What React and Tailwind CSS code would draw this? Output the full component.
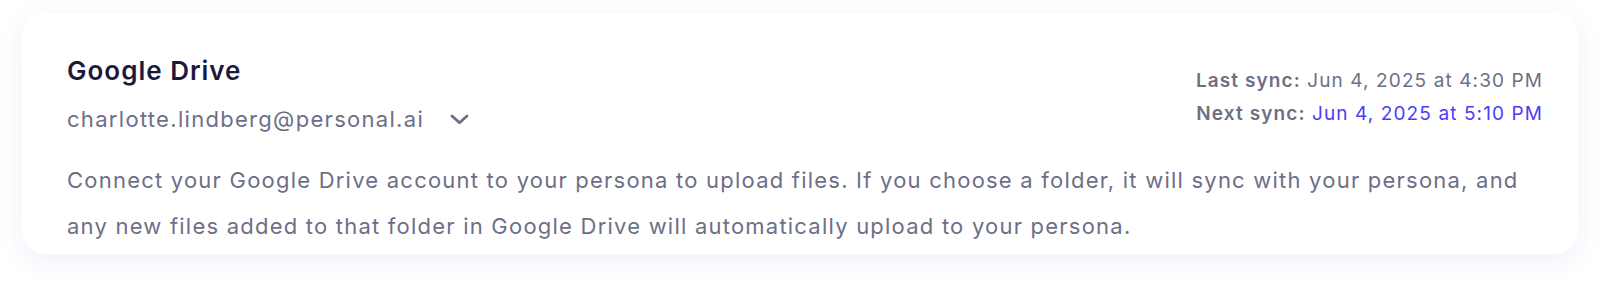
const GoogleDriveCard = () => {
  return (
    <div className="min-h-[286px] w-[1600px] bg-white pt-[13px] px-[22px] font-['Inter',sans-serif]">
      <div className="rounded-[24px] bg-white pt-[42px] pb-[5px] pl-[45px] pr-[35px] shadow-[0_6px_26px_rgba(100,90,240,0.1)]">
        <div className="flex items-start justify-between">
          <div>
            <h2 className="text-[26px] leading-[32px] font-semibold tracking-[1px] text-[#1b1a3d]">Google Drive</h2>
            <button type="button" className="mt-[16px] flex items-center gap-[26px] text-[22px] leading-[32px] tracking-[1.3px] text-[#6d6f87]">
              <span>charlotte.lindberg@personal.ai</span>
              <svg width="19" height="11" viewBox="0 0 19 11" fill="none" stroke="currentColor" strokeWidth="2.8" strokeLinecap="round" strokeLinejoin="round">
                <polyline points="2,2 9.5,8.8 17,2" />
              </svg>
            </button>
          </div>
          <div className="mt-[9px] text-right text-[19px] leading-[33px] tracking-[1.1px] text-[#6d6f87]">
            <p>
              <span className="font-semibold">Last sync:</span> Jun 4, 2025 at 4:30 PM
            </p>
            <p>
              <span className="font-semibold">Next sync:</span> <span className="text-[#4c3ef4]">Jun 4, 2025 at 5:10 PM</span>
            </p>
          </div>
        </div>
        <p className="mt-[22px] text-[22px] leading-[46px] tracking-[1.22px] text-[#6d6f87]">
          Connect your Google Drive account to your persona to upload files. If you choose a folder, it will sync with your persona, and any new files added to that folder in Google Drive will automatically upload to your persona.
        </p>
      </div>
    </div>
  )
}

export default function App() {
  return <GoogleDriveCard />
}
